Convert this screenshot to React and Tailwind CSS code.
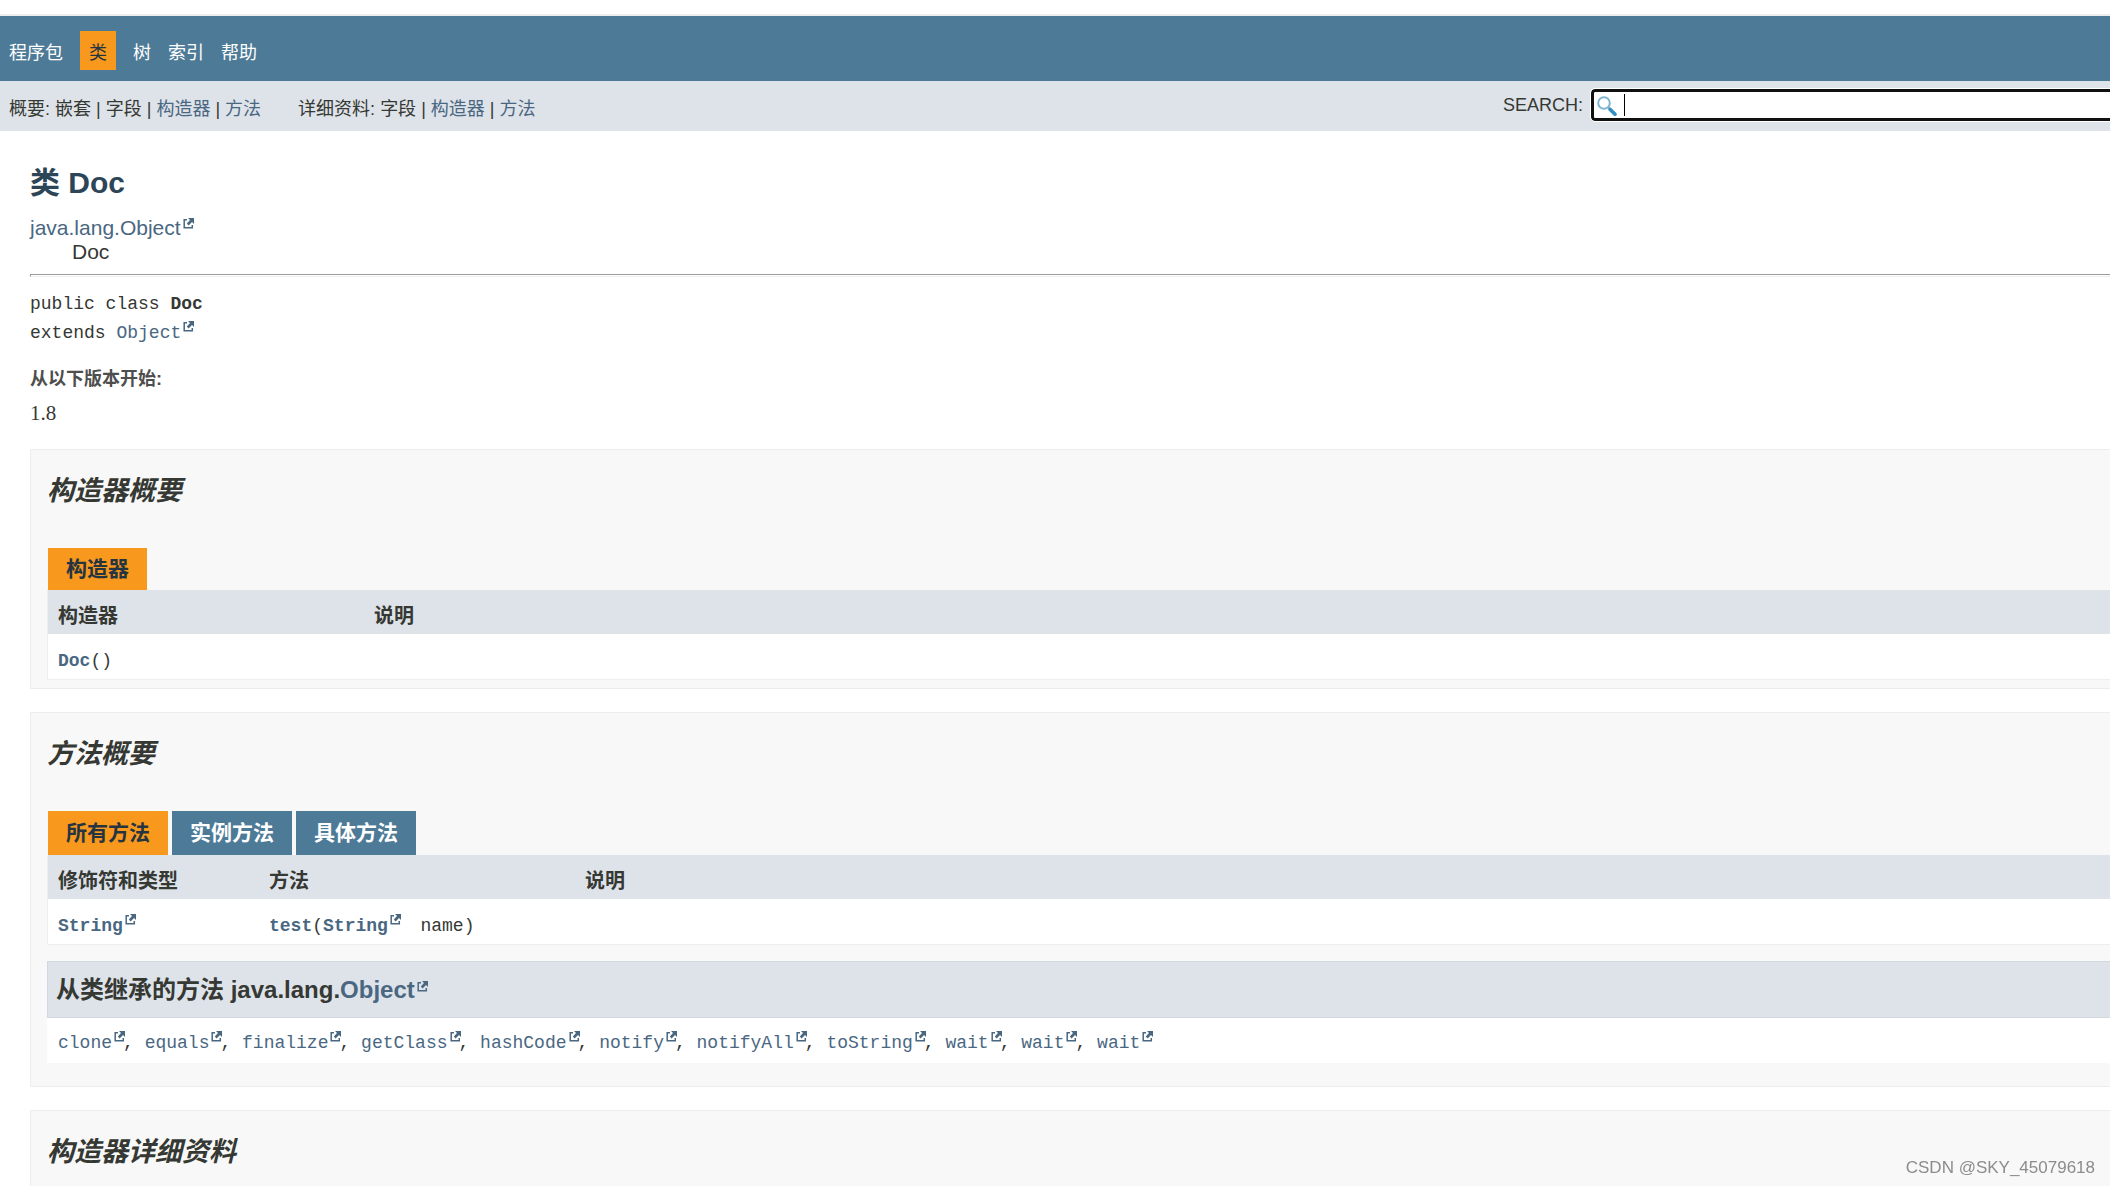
import React, { useState } from "react";

const navItems = ["程序包", "类", "树", "索引", "帮助"];

const methodTabs = ["所有方法", "实例方法", "具体方法"];

const inheritedMethods = [
  "clone",
  "equals",
  "finalize",
  "getClass",
  "hashCode",
  "notify",
  "notifyAll",
  "toString",
  "wait",
  "wait",
  "wait",
];

const mono = "font-['Liberation_Mono','Noto_Sans_CJK_SC',monospace]";

const ExternalIcon = () => (
  <svg
    viewBox="0 0 11 11"
    className="inline-block w-[11px] h-[11px] align-baseline relative -top-1.5 left-0.5"
    fill="none"
    stroke="currentColor"
    aria-hidden="true"
  >
    <path d="M4 1.7H1.2V9.8H9.3V7" strokeWidth="1.5" />
    <path d="M5 0H11V6L9 4L5.6 7.4L3.8 5.6L7 2Z" fill="currentColor" stroke="none" />
  </svg>
);

const ExternalLink = ({ children, className = "" }) => (
  <a href="#" className={`text-[#4a6782] whitespace-nowrap ${className}`}>
    {children}
    <ExternalIcon />
  </a>
);

const SearchIcon = () => (
  <svg
    viewBox="0 0 20 20"
    className="absolute left-1.5 top-[7px] w-5 h-5"
    fill="none"
    aria-hidden="true"
  >
    <circle cx="7" cy="7" r="5.8" stroke="#7db5d3" strokeWidth="2" />
    <path d="M11.5 11.5L13 13.2" stroke="#9a9a9a" strokeWidth="2" />
    <path d="M13.2 13.4L18 18.2" stroke="#2f8fc4" strokeWidth="3.6" strokeLinecap="round" />
  </svg>
);

/* "|" separated links of the sub navigation */
const SubNav = ({ label, items }) => (
  <div>
    {label}:{" "}
    {items.map((item, i) => (
      <React.Fragment key={item.name}>
        {i > 0 && " | "}
        {item.link ? (
          <a href="#" className="text-[#4a6782]">
            {item.name}
          </a>
        ) : (
          item.name
        )}
      </React.Fragment>
    ))}
  </div>
);

const Section = ({ title, className = "", children }) => (
  <section
    className={`border border-r-0 border-[#ededed] bg-[#f8f8f8] pl-4 pt-[26px] ${className}`}
  >
    <h2 className="text-[27px] leading-[30px] font-bold italic">{title}</h2>
    {children}
  </section>
);

const Th = ({ className = "", children }) => (
  <th className={`h-11 px-2.5 pt-2 text-left text-[20px] leading-6 font-bold ${className}`}>
    {children}
  </th>
);

const Td = ({ children }) => (
  <td className={`h-[45px] px-2.5 pt-2 text-[18px] leading-6 ${mono}`}>{children}</td>
);

const App = () => {
  const [activeTab, setActiveTab] = useState("所有方法");
  const [query, setQuery] = useState("");

  return (
    <div className="min-h-screen flex flex-col overflow-x-hidden bg-white text-[#353833] font-['Liberation_Sans','Noto_Sans_CJK_SC',sans-serif]">
      {/* TOP NAV */}
      <header className="mt-3.5 border-t-2 border-[#eeeeee] text-[18px]">
        <nav className="bg-[#4d7a97] text-white h-[65px] pl-[9px] pt-1 flex items-center gap-[17px]">
          {navItems.map((item) => (
            <a
              key={item}
              href="#"
              className={
                item === "类"
                  ? "bg-[#f8981d] text-[#253441] px-[9px] h-[39px] leading-[45px]"
                  : "h-[39px] leading-[45px]"
              }
            >
              {item}
            </a>
          ))}
        </nav>

        {/* SUB NAV */}
        <div className="bg-[#dee3e9] h-[50px] pl-[9px] flex justify-between">
          <div className="flex gap-[37px] pt-1 leading-[48px]">
            <SubNav
              label="概要"
              items={[
                { name: "嵌套" },
                { name: "字段" },
                { name: "构造器", link: true },
                { name: "方法", link: true },
              ]}
            />
            <SubNav
              label="详细资料"
              items={[
                { name: "字段" },
                { name: "构造器", link: true },
                { name: "方法", link: true },
              ]}
            />
          </div>
          <form
            className="flex items-start gap-2 w-[607px] pt-2"
            onSubmit={(e) => e.preventDefault()}
          >
            <label htmlFor="search" className="leading-[32px]">
              SEARCH:
            </label>
            <div className="relative flex-1">
              <input
                id="search"
                type="text"
                value={query}
                onChange={(e) => setQuery(e.target.value)}
                className="block w-full h-8 pl-[30px] bg-white border-[3px] border-r-0 border-[#101010] rounded-l-sm outline outline-white"
              />
              <SearchIcon />
              {!query && <span className="absolute left-[33px] top-[5px] w-px h-[22px] bg-black" />}
            </div>
          </form>
        </div>
      </header>

      <main className="flex-1 flex flex-col pl-[30px]">
        <h1 className="mt-[34px] text-[30px] leading-9 font-bold text-[#2c4557]">类 Doc</h1>

        {/* INHERITANCE */}
        <div className="mt-[15px] text-[21px] leading-6">
          <ExternalLink>java.lang.Object</ExternalLink>
          <div className="pl-[42px]">Doc</div>
        </div>

        <hr className="mt-2.5 h-[3px] border-t-[1px] border-l border-b border-t-[#9a9a9a] border-l-[#9a9a9a] border-b-[#eeeeee]" />

        <div className={`mt-[13px] text-[18px] leading-[29px] ${mono}`}>
          <div>
            public class <span className="font-bold">Doc</span>
          </div>
          <div>
            extends <ExternalLink>Object</ExternalLink>
          </div>
        </div>

        <dl className="mt-[17px] leading-7">
          <dt className="text-[18px] font-bold text-[#4e4e4e]">从以下版本开始:</dt>
          <dd className="mt-1.5 text-[21px] font-['Liberation_Serif',serif]">1.8</dd>
        </dl>

        <div className="flex-1 flex flex-col gap-[23px] mt-[22px]">
          {/* CONSTRUCTOR SUMMARY */}
          <Section title="构造器概要" className="pb-2">
            <div className="mt-[42px] pl-px flex">
              <div className="bg-[#f8981d] text-[#253441] px-[18px] text-[21px] leading-[42px] font-bold">
                构造器
              </div>
            </div>
            <div className="border-l border-b border-[#eeeeee]">
              <table className="w-full table-fixed bg-white">
                <thead className="bg-[#dee3e9]">
                  <tr>
                    <Th className="w-[316px]">构造器</Th>
                    <Th>说明</Th>
                  </tr>
                </thead>
                <tbody>
                  <tr>
                    <Td>
                      <a href="#" className="font-bold text-[#4a6782]">
                        Doc
                      </a>
                      ()
                    </Td>
                    <Td></Td>
                  </tr>
                </tbody>
              </table>
            </div>
          </Section>

          {/* METHOD SUMMARY */}
          <Section title="方法概要" className="pb-[23px]">
            <div className="mt-[42px] pl-px flex gap-1">
              {methodTabs.map((tab) => (
                <button
                  key={tab}
                  type="button"
                  onClick={() => setActiveTab(tab)}
                  className={`px-[18px] text-[21px] leading-[44px] font-bold ${
                    activeTab === tab ? "bg-[#f8981d] text-[#253441]" : "bg-[#4d7a97] text-white"
                  }`}
                >
                  {tab}
                </button>
              ))}
            </div>
            <div className="border-l border-b border-[#eeeeee]">
              <table className="w-full table-fixed bg-white">
                <thead className="bg-[#dee3e9]">
                  <tr>
                    <Th className="w-[211px]">修饰符和类型</Th>
                    <Th className="w-[316px]">方法</Th>
                    <Th>说明</Th>
                  </tr>
                </thead>
                <tbody>
                  <tr>
                    <Td>
                      <ExternalLink className="font-bold">String</ExternalLink>
                    </Td>
                    <Td>
                      <a href="#" className="font-bold text-[#4a6782]">
                        test
                      </a>
                      (<ExternalLink className="font-bold">String</ExternalLink>
                      {"\u00a0\u00a0"}name)
                    </Td>
                    <Td></Td>
                  </tr>
                </tbody>
              </table>
            </div>

            {/* INHERITED METHODS */}
            <h3 className="mt-4 h-[57px] pl-2 border border-r-0 border-[#d0d9e0] bg-[#dee3e9] text-[24px] leading-[55px] font-bold">
              从类继承的方法 java.lang.<ExternalLink>Object</ExternalLink>
            </h3>
            <div className={`bg-white min-h-[45px] pl-[11px] pt-[11px] text-[18px] leading-7 ${mono}`}>
              {inheritedMethods.map((name, i) => (
                <React.Fragment key={i}>
                  {i > 0 && ", "}
                  <ExternalLink>{name}</ExternalLink>
                </React.Fragment>
              ))}
            </div>
          </Section>

          {/* CONSTRUCTOR DETAILS */}
          <Section title="构造器详细资料" className="flex-1 border-b-0" />
        </div>
      </main>

      <div className="fixed right-[15px] bottom-2 text-[17px] leading-5 text-[#8c8c8c]">
        CSDN @SKY_45079618
      </div>
    </div>
  );
};

export default App;
